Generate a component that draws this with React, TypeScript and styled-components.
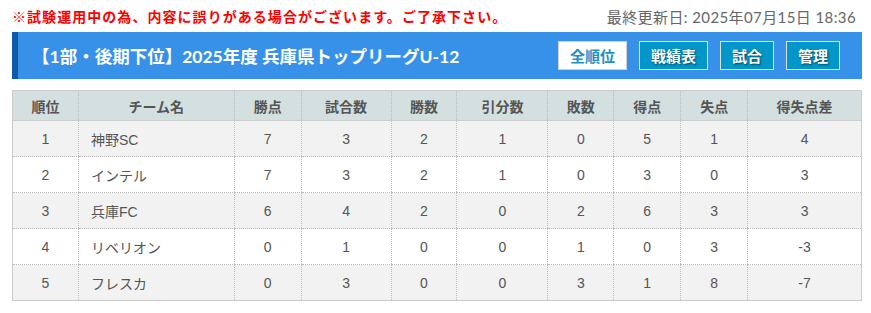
import React from "react";
import styled, { createGlobalStyle } from "styled-components";

const GlobalStyle = createGlobalStyle`
  body {
    margin: 0;
    background: #fff;
    font-family: "Lato", "Noto Sans CJK JP", sans-serif;
  }
`;

const Page = styled.div`
  padding: 0 9px 0 12px;
`;

const TopLine = styled.div`
  height: 32px;
  display: flex;
  align-items: center;
  justify-content: space-between;
`;

const Notice = styled.span`
  color: #f00;
  font-weight: bold;
  font-size: 14px;
  letter-spacing: 1.05px;
  font-family: "Noto Sans CJK JP", sans-serif;
`;

const Updated = styled.span`
  color: #666;
  font-size: 15px;
  letter-spacing: 0.4px;
  margin-right: 6px;
`;

const TitleBar = styled.div`
  height: 47px;
  display: flex;
  align-items: center;
  justify-content: space-between;
  background: #3891e9;
  border-left: 6px solid #0d5aa7;
  padding: 0 22px 0 14px;
`;

const Title = styled.h1`
  margin: 0;
  color: #fff;
  font-size: 17.5px;
  font-weight: bold;
`;

const Nav = styled.nav`
  display: flex;
  gap: 12px;
`;

const NavButton = styled.a<{ $active?: boolean }>`
  height: 29px;
  box-sizing: border-box;
  padding: 0 11px;
  display: flex;
  align-items: center;
  font-family: "Noto Sans CJK JP", sans-serif;
  font-size: 15px;
  font-weight: bold;
  text-decoration: none;
  border: 1px solid ${({ $active }) => ($active ? "#d0d0d0" : "#d6e4ee")};
  background: ${({ $active }) => ($active ? "#fff" : "#0396c9")};
  color: ${({ $active }) => ($active ? "#1a8fc9" : "#fff")};
  text-shadow: ${({ $active }) => ($active ? "none" : "1px 1px 2px rgba(0,0,0,0.55)")};
`;

const Table = styled.table`
  margin-top: 11px;
  width: 100%;
  border-collapse: collapse;
  border: 1px solid #ccc;
  font-family: "Liberation Sans", "Noto Sans CJK JP", sans-serif;
  font-size: 14px;
  color: #555;
`;

const Th = styled.th`
  height: 29px;
  padding: 0;
  background: #d4e0e0;
  font-family: "Noto Sans CJK JP", sans-serif;
  font-weight: bold;
  font-size: 14px;
  color: #555;
  border-left: 1px dotted #bbb;
  border-bottom: 1px solid #ccc;
  &:first-child {
    border-left: none;
  }
`;

const Row = styled.tr`
  &:nth-child(odd) {
    background: #f2f2f2;
  }
`;

const Td = styled.td<{ $left?: boolean }>`
  height: 35px;
  padding: 0 ${({ $left }) => ($left ? "12px" : "0")};
  text-align: ${({ $left }) => ($left ? "left" : "center")};
  border-left: 1px dotted #bbb;
  border-bottom: 1px dotted #bbb;
  &:first-child {
    border-left: none;
  }
`;

const columns: [string, number][] = [
  ["順位", 66],
  ["チーム名", 156],
  ["勝点", 67],
  ["試合数", 90],
  ["勝数", 66],
  ["引分数", 91],
  ["敗数", 66],
  ["得点", 67],
  ["失点", 67],
  ["得失点差", 114],
];

const rows: (string | number)[][] = [
  [1, "神野SC", 7, 3, 2, 1, 0, 5, 1, 4],
  [2, "インテル", 7, 3, 2, 1, 0, 3, 0, 3],
  [3, "兵庫FC", 6, 4, 2, 0, 2, 6, 3, 3],
  [4, "リベリオン", 0, 1, 0, 0, 1, 0, 3, -3],
  [5, "フレスカ", 0, 3, 0, 0, 3, 1, 8, -7],
];

export default function App() {
  return (
    <Page>
      <GlobalStyle />
      <TopLine>
        <Notice>※試験運用中の為、内容に誤りがある場合がございます。ご了承下さい。</Notice>
        <Updated>最終更新日: 2025年07月15日 18:36</Updated>
      </TopLine>
      <TitleBar>
        <Title>【1部・後期下位】2025年度 兵庫県トップリーグU-12</Title>
        <Nav>
          <NavButton $active>全順位</NavButton>
          <NavButton>戦績表</NavButton>
          <NavButton>試合</NavButton>
          <NavButton>管理</NavButton>
        </Nav>
      </TitleBar>
      <Table>
        <colgroup>
          {columns.map(([name, w]) => (
            <col key={name} style={{ width: w }} />
          ))}
        </colgroup>
        <thead>
          <tr>
            {columns.map(([name]) => (
              <Th key={name}>{name}</Th>
            ))}
          </tr>
        </thead>
        <tbody>
          {rows.map((r) => (
            <Row key={r[0]}>
              {r.map((v, i) => (
                <Td key={i} $left={i === 1}>
                  {v}
                </Td>
              ))}
            </Row>
          ))}
        </tbody>
      </Table>
    </Page>
  );
}
